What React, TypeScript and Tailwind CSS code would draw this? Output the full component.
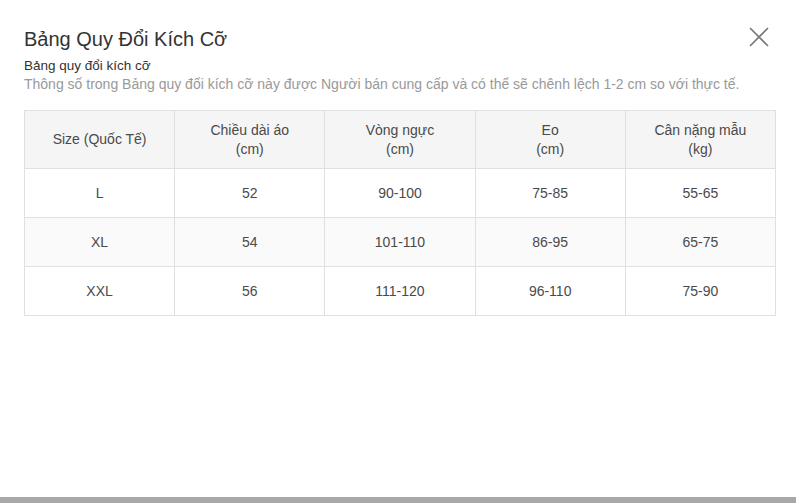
const headers = [
  ['Size (Quốc Tế)'],
  ['Chiều dài áo', '(cm)'],
  ['Vòng ngực', '(cm)'],
  ['Eo', '(cm)'],
  ['Cân nặng mẫu', '(kg)'],
];

const rows = [
  ['L', '52', '90-100', '75-85', '55-65'],
  ['XL', '54', '101-110', '86-95', '65-75'],
  ['XXL', '56', '111-120', '96-110', '75-90'],
];

export default function App() {
  return (
    <div className="flex h-[503px] w-[796px] flex-col bg-white font-['Liberation_Sans',Arial,sans-serif] text-[#333]">
      <div className="flex-1 px-6 pt-[26px]">
        <div className="flex items-start justify-between">
          <h1 className="text-[20px] leading-[26px] text-[#333]">Bảng Quy Đổi Kích Cỡ</h1>
          <button className="mr-[3px] mt-[1px] text-[#777]">
            <svg width="20" height="20" viewBox="0 0 20 20" fill="none" stroke="currentColor" strokeWidth="1.6">
              <path d="M1 1L19 19M19 1L1 19" />
            </svg>
          </button>
        </div>
        <div className="mt-[5px] text-[13.5px] leading-[18px] text-[#333]">Bảng quy đổi kích cỡ</div>
        <div className="text-[14px] leading-[18px] text-[#999]">
          Thông số trong Bảng quy đổi kích cỡ này được Người bán cung cấp và có thể sẽ chênh lệch 1-2 cm so với thực tế.
        </div>
        <table className="mt-[17px] w-[752px] table-fixed border-collapse text-center text-[14px] text-[#4a4a4a]">
          <thead>
            <tr className="h-[58px] bg-[#f5f5f5]">
              {headers.map((h, i) => (
                <th key={i} className="border border-[#e0e0e0] font-normal leading-[19px]">
                  {h.map((line) => (
                    <div key={line}>{line}</div>
                  ))}
                </th>
              ))}
            </tr>
          </thead>
          <tbody>
            {rows.map((r, i) => (
              <tr key={i} className={i === 1 ? 'h-[49px] bg-[#fafafa]' : 'h-[49px] bg-white'}>
                {r.map((c, j) => (
                  <td key={j} className="border border-[#e0e0e0]">
                    {c}
                  </td>
                ))}
              </tr>
            ))}
          </tbody>
        </table>
      </div>
      <div className="h-[6px] bg-[#a8a8a8]" />
    </div>
  );
}
